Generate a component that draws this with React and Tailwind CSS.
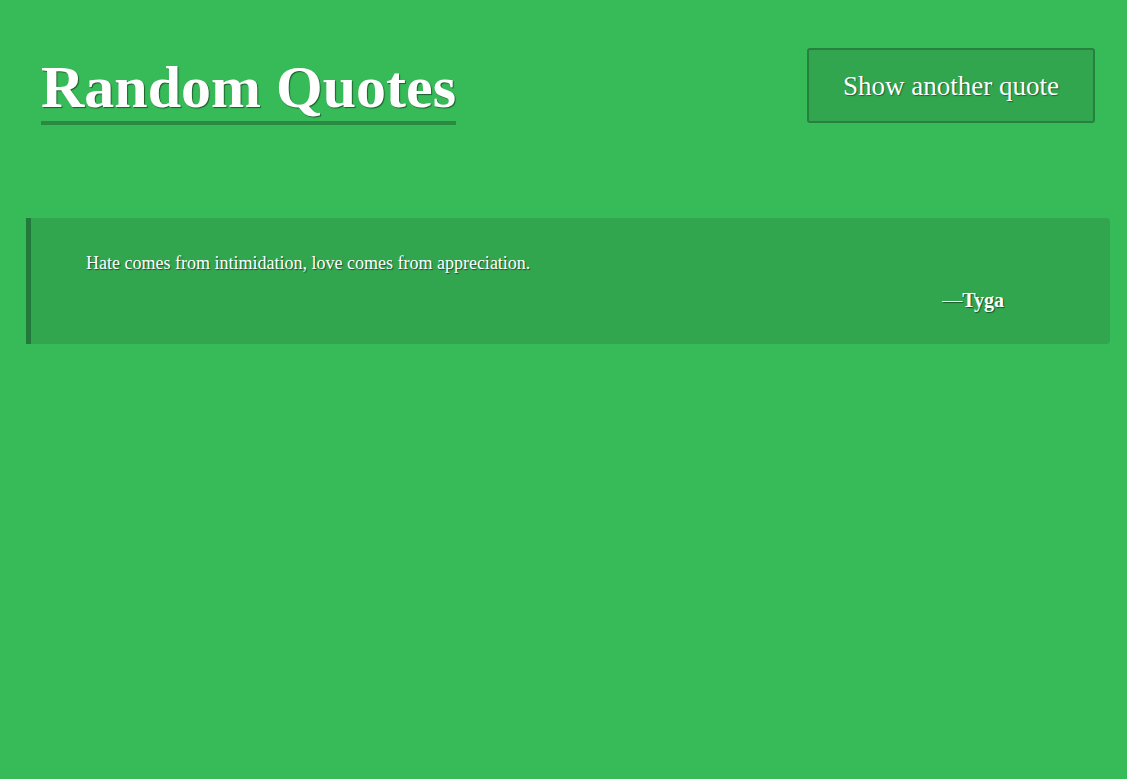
export default function App() {
  const quote = {
    text: "Hate comes from intimidation, love comes from appreciation.",
    author: "Tyga",
  };

  return (
    <div className="min-h-screen bg-[#37bb58] text-white font-['Liberation_Serif',serif]">

      {/* Header */}

      <header className="flex justify-between items-start pl-[41px] pr-[32px] pt-[48px]">
        <h1 className="text-[60px] leading-[68px] font-bold border-b-4 border-[#2a8a42] mt-[5px] [text-shadow:1px_1px_1px_rgba(0,0,0,0.5)]">
          Random Quotes
        </h1>

        <button className="w-[288px] h-[75px] pt-[2px] bg-[#31a64f] border-2 border-[#26803e] rounded-[3px] text-[27px] [text-shadow:1px_1px_1px_rgba(0,0,0,0.4)]">
          Show another quote
        </button>
      </header>

      {/* Quote */}

      <blockquote className="ml-[26px] mr-[17px] mt-[93px] bg-[#31a64f] border-l-[5px] border-[#227a3a] rounded-r-[4px] pl-[55px] pr-[106px] pt-[32px] pb-[30px] [text-shadow:1px_1px_1px_rgba(0,0,0,0.5)]">
        <p className="text-[18px] leading-[26px]">{quote.text}</p>
        <p className="text-right text-[20px] leading-[28px] mt-[10px]">
          —<span className="font-bold">{quote.author}</span>
        </p>
      </blockquote>

    </div>
  );
}
